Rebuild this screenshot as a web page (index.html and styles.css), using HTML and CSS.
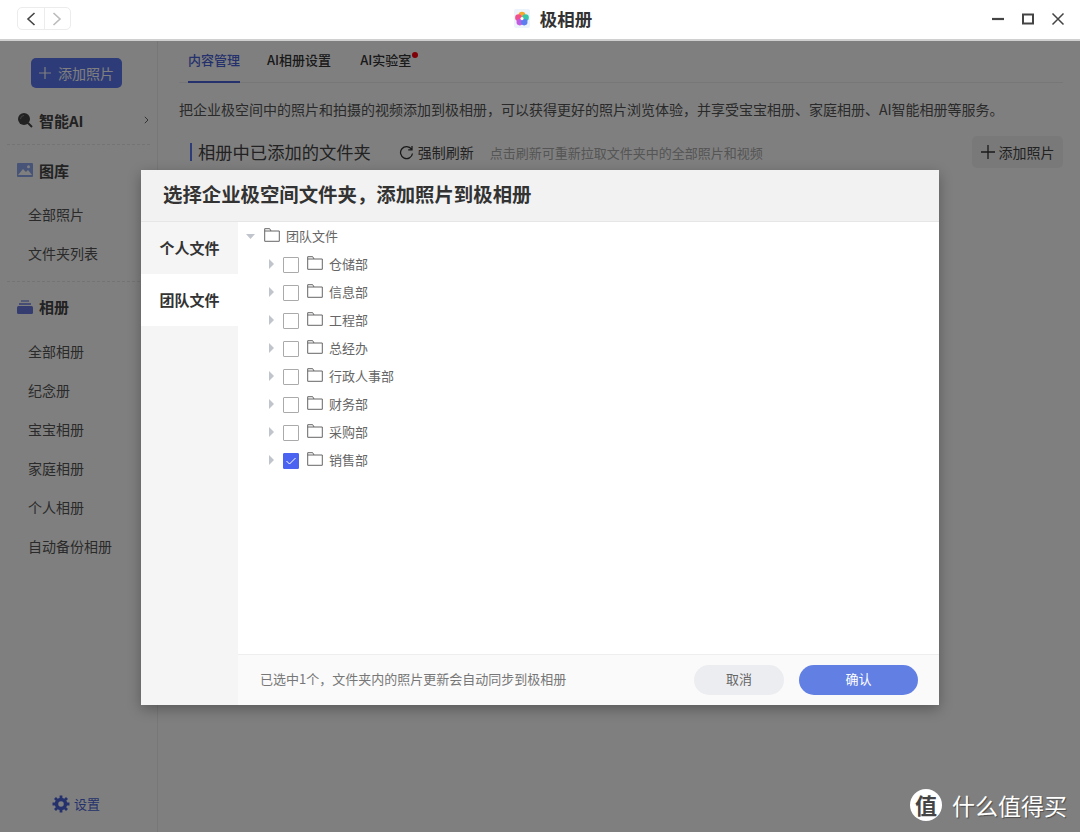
FILE: index.html
```html
<!DOCTYPE html>
<html lang="zh">
<head>
<meta charset="utf-8">
<title>极相册</title>
<link rel="stylesheet" href="styles.css">
</head>
<body>
<div class="app">
  <header class="titlebar">
    <div class="navgroup">
      <button class="navbtn"><svg width="12" height="16" viewBox="0 0 12 16"><path d="M9.5 2 3 8l6.5 6" fill="none" stroke="#444" stroke-width="1.6"/></svg></button>
      <button class="navbtn"><svg width="12" height="16" viewBox="0 0 12 16"><path d="M2.5 2 9 8l-6.500 6" fill="none" stroke="#bbb" stroke-width="1.600"/></svg></button>
    </div>
    <div class="apptitle">
      <span class="applogo"><svg width="14" height="16" viewBox="0 0 16 18"><circle cx="8" cy="4.500" r="3.800" fill="#f7a72b"/><circle cx="4" cy="7.500" r="3.800" fill="#f0508c"/><circle cx="12" cy="7.500" r="3.800" fill="#38c6a8"/><circle cx="5.500" cy="12.500" r="3.800" fill="#c35be0"/><circle cx="10.500" cy="12.500" r="3.800" fill="#5d7cf0"/><circle cx="8" cy="8.500" r="1.800" fill="#fff"/></svg></span>
      <span>极相册</span>
    </div>
    <div class="winctl">
      <svg width="14" height="14" viewBox="0 0 14 14"><path d="M1 7h12" stroke="#444" stroke-width="2.200"/></svg>
      <svg width="14" height="14" viewBox="0 0 14 14"><rect x="2" y="2.500" width="10" height="9" fill="none" stroke="#444" stroke-width="2"/></svg>
      <svg width="14" height="14" viewBox="0 0 14 14"><path d="m1.500 1.500 11 11M12.500 1.500l-11 11" stroke="#444" stroke-width="1.500"/></svg>
    </div>
  </header>

  <div class="content">
    <aside class="sidebar">
      <button class="addmain"><svg width="14" height="14" viewBox="0 0 14 14"><path d="M7 1v12M1 7h12" stroke="#fff" stroke-width="1.200"/></svg>添加照片</button>
      <div class="section section-first">
        <div class="sechead">
          <svg class="secicon" width="16" height="16" viewBox="0 0 16 16"><circle cx="7" cy="7" r="6" fill="#444"/><path d="m11 11 4 4" stroke="#444" stroke-width="2"/><path d="M3.500 7A3.500 3.500 0 0 1 7 3.500" stroke="#888" fill="none"/></svg>
          <span class="secname">智能AI</span>
          <svg class="chev" width="5" height="8" viewBox="0 0 5 8"><path d="m.8.8 3.200 3.200L.8 7.200" fill="none" stroke="#666" stroke-width="1"/></svg>
        </div>
      </div>
      <div class="section">
        <div class="sechead">
          <svg class="secicon" width="16" height="16" viewBox="0 0 16 16"><rect y="1" width="16" height="14" rx="1" fill="#8fa8ee"/><path d="M1 13 6 7l3 3 2-2 4 5Z" fill="#fff"/><circle cx="11.500" cy="4.800" r="1.500" fill="#fff"/></svg>
          <span class="secname">图库</span>
        </div>
        <a class="navitem">全部照片</a>
        <a class="navitem">文件夹列表</a>
      </div>
      <div class="section section-albums">
        <div class="sechead">
          <svg class="secicon" width="16" height="16" viewBox="0 0 16 16"><rect x="4" y="1" width="8" height="2" fill="#a9b6ee"/><rect x="2" y="4" width="12" height="2" fill="#8c9cea"/><rect y="7" width="16" height="8" rx="1.500" fill="#6a78e0"/></svg>
          <span class="secname">相册</span>
        </div>
        <a class="navitem">全部相册</a>
        <a class="navitem">纪念册</a>
        <a class="navitem">宝宝相册</a>
        <a class="navitem">家庭相册</a>
        <a class="navitem">个人相册</a>
        <a class="navitem">自动备份相册</a>
      </div>
      <div class="settings">
        <svg width="18" height="18" viewBox="0 0 18 18"><circle cx="9" cy="9" r="4.500" fill="none" stroke="#4a63d8" stroke-width="3.500"/><path d="M9 .5v3M9 14.500v3M.5 9h3M14.500 9h3M3 3l2 2M13 13l2 2M15 3l-2 2M5 13l-2 2" stroke="#4a63d8" stroke-width="2.800"/></svg>
        <span>设置</span>
      </div>
    </aside>

    <main class="main">
      <nav class="tabs">
        <a class="tab tab-active">内容管理</a>
        <a class="tab">AI相册设置</a>
        <a class="tab tab-dot">AI实验室</a>
      </nav>
      <p class="intro">把企业极空间中的照片和拍摄的视频添加到极相册，可以获得更好的照片浏览体验，并享受宝宝相册、家庭相册、AI智能相册等服务。</p>
      <div class="folderbar">
        <h2 class="foldertitle">相册中已添加的文件夹</h2>
        <span class="refresh"><svg width="15" height="15" viewBox="0 0 15 15"><path d="M12.500 4.200A6 6 0 1 0 13.500 8.500M13 1v3.800H9.200" fill="none" stroke="#333" stroke-width="1.300"/></svg>强制刷新</span>
        <span class="hint">点击刷新可重新拉取文件夹中的全部照片和视频</span>
        <button class="addsmall"><svg width="14" height="14" viewBox="0 0 14 14"><path d="M7 0v14M0 7h14" stroke="#333" stroke-width="1.300"/></svg>添加照片</button>
      </div>
    </main>
  </div>

  <div class="backdrop"></div>

  <section class="modal">
    <h1 class="modalhead">选择企业极空间文件夹，添加照片到极相册</h1>
    <div class="modalbody">
      <div class="modaltabs">
        <div class="mtab">个人文件</div>
        <div class="mtab mtab-active">团队文件</div>
      </div>
      <div class="treepane">
        <div class="tree">
          <div class="row row-root">
            <svg class="arrow" width="9" height="9" viewBox="0 0 9 9"><path d="M0 2h9L4.500 7Z" fill="#c0c4cc"/></svg>
            <svg class="folder" width="16" height="14" viewBox="0 0 16 14"><path d="M.7.7h5l1.300 2.300h8.300v10.300H.7ZM.7 3h6.300" fill="none" stroke="#666" stroke-width="1"/></svg>
            <span>团队文件</span>
          </div>
          <div class="row"><svg class="arrow" width="7" height="10" viewBox="0 0 7 10"><path d="M2 0v10l5-5Z" fill="#c0c4cc"/></svg><i class="check"></i><svg class="folder" width="16" height="14" viewBox="0 0 16 14"><path d="M.7.7h5l1.300 2.300h8.300v10.300H.7ZM.7 3h6.300" fill="none" stroke="#666" stroke-width="1"/></svg><span>仓储部</span></div>
          <div class="row"><svg class="arrow" width="7" height="10" viewBox="0 0 7 10"><path d="M2 0v10l5-5Z" fill="#c0c4cc"/></svg><i class="check"></i><svg class="folder" width="16" height="14" viewBox="0 0 16 14"><path d="M.7.7h5l1.300 2.300h8.300v10.300H.7ZM.7 3h6.300" fill="none" stroke="#666" stroke-width="1"/></svg><span>信息部</span></div>
          <div class="row"><svg class="arrow" width="7" height="10" viewBox="0 0 7 10"><path d="M2 0v10l5-5Z" fill="#c0c4cc"/></svg><i class="check"></i><svg class="folder" width="16" height="14" viewBox="0 0 16 14"><path d="M.7.7h5l1.300 2.300h8.300v10.300H.7ZM.7 3h6.300" fill="none" stroke="#666" stroke-width="1"/></svg><span>工程部</span></div>
          <div class="row"><svg class="arrow" width="7" height="10" viewBox="0 0 7 10"><path d="M2 0v10l5-5Z" fill="#c0c4cc"/></svg><i class="check"></i><svg class="folder" width="16" height="14" viewBox="0 0 16 14"><path d="M.7.7h5l1.300 2.300h8.300v10.300H.7ZM.7 3h6.300" fill="none" stroke="#666" stroke-width="1"/></svg><span>总经办</span></div>
          <div class="row"><svg class="arrow" width="7" height="10" viewBox="0 0 7 10"><path d="M2 0v10l5-5Z" fill="#c0c4cc"/></svg><i class="check"></i><svg class="folder" width="16" height="14" viewBox="0 0 16 14"><path d="M.7.7h5l1.300 2.300h8.300v10.300H.7ZM.7 3h6.300" fill="none" stroke="#666" stroke-width="1"/></svg><span>行政人事部</span></div>
          <div class="row"><svg class="arrow" width="7" height="10" viewBox="0 0 7 10"><path d="M2 0v10l5-5Z" fill="#c0c4cc"/></svg><i class="check"></i><svg class="folder" width="16" height="14" viewBox="0 0 16 14"><path d="M.7.7h5l1.300 2.300h8.300v10.300H.7ZM.7 3h6.300" fill="none" stroke="#666" stroke-width="1"/></svg><span>财务部</span></div>
          <div class="row"><svg class="arrow" width="7" height="10" viewBox="0 0 7 10"><path d="M2 0v10l5-5Z" fill="#c0c4cc"/></svg><i class="check"></i><svg class="folder" width="16" height="14" viewBox="0 0 16 14"><path d="M.7.7h5l1.300 2.300h8.300v10.300H.7ZM.7 3h6.300" fill="none" stroke="#666" stroke-width="1"/></svg><span>采购部</span></div>
          <div class="row"><svg class="arrow" width="7" height="10" viewBox="0 0 7 10"><path d="M2 0v10l5-5Z" fill="#c0c4cc"/></svg><i class="check check-on"><svg width="16" height="16" viewBox="0 0 16 16"><path d="m3.500 8 3 3 6-6" fill="none" stroke="#fff" stroke-width="1"/></svg></i><svg class="folder" width="16" height="14" viewBox="0 0 16 14"><path d="M.7.7h5l1.300 2.300h8.300v10.300H.7ZM.7 3h6.300" fill="none" stroke="#666" stroke-width="1"/></svg><span>销售部</span></div>
        </div>
        <footer class="modalfoot">
          <span class="footnote">已选中1个，文件夹内的照片更新会自动同步到极相册</span>
          <button class="btn btn-cancel">取消</button>
          <button class="btn btn-ok">确认</button>
        </footer>
      </div>
    </div>
  </section>

  <div class="watermark">
    <span class="wmlogo">值</span>
    <span>什么值得买</span>
  </div>
</div>
</body>
</html>
```
FILE: styles.css
```css
* { box-sizing: border-box; }
html, body { margin: 0; height: 100%; }
body {
  font-family: "Noto Sans CJK SC", "Noto Sans", sans-serif;
  color: #333;
  background: #fff;
  overflow: hidden;
}
button { font-family: inherit; }
.app { position: relative; width: 1080px; height: 832px; display: flex; flex-direction: column; overflow: hidden; }

.titlebar {
  height: 41px; flex: none; display: flex; align-items: center; justify-content: space-between;
  padding: 0 15px 2px 17px; background: #fff; border-bottom: 2px solid #d0d0d0; position: relative; z-index: 3;
}
.navgroup { display: flex; width: 54px; height: 23px; border: 1px solid #ececec; border-radius: 5px; }
.navbtn { flex: 1; padding: 0; border: 0; background: none; display: flex; align-items: center; justify-content: center; }
.navbtn + .navbtn { border-left: 1px solid #ececec; }
.apptitle { display: flex; align-items: center; gap: 10px; font-size: 17.5px; font-weight: 700; color: #333; line-height: 24px; margin-left: 44px; }
.applogo { width: 16px; height: 19px; background: #edf3fb; display: flex; align-items: center; justify-content: center; border-radius: 2px; }
.winctl { display: flex; gap: 16px; align-items: center; }

.content { flex: 1; display: flex; min-height: 0; }
.sidebar { width: 158px; flex: none; border-right: 1px solid #eee; display: flex; flex-direction: column; padding: 17px 7px 0; position: relative; }
.addmain {
  align-self: center; width: 91px; height: 30px; margin-right: 5px; border: 0; border-radius: 5px; background: #5b77f0; color: #fff;
  display: flex; align-items: center; justify-content: center; gap: 6px; font-size: 14px; padding: 0;
}
.section { border-top: 1px dashed #e8e8e8; padding-bottom: 8px; }
.section-first { border-top: 0; margin-top: 18px; padding-bottom: 10px; }
.sechead { height: 50px; display: flex; align-items: center; padding: 0 0 0 10px; gap: 6px; position: relative; }
.section-first .sechead { height: 28px; }
.section-albums .sechead { height: 49.5px; }
.secname { font-size: 15px; font-weight: 700; color: #444; }
.secicon { flex: none; }
.chev { margin-left: auto; margin-right: 1px; }
.navitem { display: block; height: 39px; line-height: 39px; font-size: 14px; color: #555; padding-left: 21px; }
.settings { margin-top: auto; margin-bottom: 19px; display: flex; align-items: center; justify-content: center; gap: 4px; font-size: 13px; color: #4a63d8; padding-right: 5px; }

.main { flex: 1; min-width: 0; padding: 0 17px 0 21px; }
.tabs { height: 42px; display: flex; gap: 27px; border-bottom: 1px solid #eee; padding-left: 9px; }
.tab { height: 42px; line-height: 37px; font-size: 13px; font-weight: 500; color: #333; position: relative; }
.tab-active { color: #4a63d8; border-bottom: 2px solid #4a63d8; }
.tab-dot { margin-left: 2px; }
.tab-dot::after { content: ""; position: absolute; right: -7px; top: 11px; width: 6px; height: 6px; border-radius: 50%; background: #ff0010; }
.intro { margin: 14px 0 0; font-size: 14px; line-height: 24px; color: #555; white-space: nowrap; }
.folderbar { display: flex; align-items: center; margin-top: 15px; height: 32px; padding-left: 11px; border-bottom: 0; }
.foldertitle { margin: 0 28px 0 0; font-size: 17.3px; font-weight: 400; color: #444; border-left: 2px solid #5b77f0; padding-left: 6px; line-height: 18px; }
.refresh { display: flex; align-items: center; gap: 4px; font-size: 14px; color: #444; }
.hint { margin-left: 16px; font-size: 13px; color: #aaa; }
.addsmall { margin-left: auto; width: 91px; height: 32px; border: 0; border-radius: 5px; background: #f2f2f2; color: #444; font-size: 14px; display: flex; align-items: center; justify-content: center; gap: 4px; padding: 0; }

.backdrop { position: absolute; left: 0; right: 0; top: 41px; bottom: 0; background: rgba(0,0,0,.5); z-index: 1; }

.modal {
  position: absolute; left: 141px; top: 170px; width: 798px; height: 535px; background: #fff; z-index: 2;
  display: flex; flex-direction: column; box-shadow: 0 4px 14px rgba(0,0,0,.3); border-radius: 3px 3px 0 0;
}
.modalhead { margin: 0; height: 52px; flex: none; background: #f2f2f2; border-bottom: 1px solid #e6e6e6; font-size: 19.4px; font-weight: 700; color: #333; line-height: 48px; padding-left: 22px; }
.modalbody { flex: 1; display: flex; min-height: 0; }
.modaltabs { width: 97px; flex: none; background: #f5f5f5; }
.mtab { height: 52px; line-height: 52px; font-size: 15px; font-weight: 700; color: #333; padding-left: 18.5px; }
.mtab-active { background: #fff; }
.treepane { flex: 1; display: flex; flex-direction: column; min-width: 0; }
.tree { flex: 1; }
.row { height: 28px; display: flex; align-items: center; padding-left: 29px; font-size: 13px; color: #666; }
.row span { margin-top: -2px; }
.row .arrow { flex: none; margin-right: 9px; }
.row .folder { flex: none; margin: -3px 6px 0 0; }
.row-root { padding-left: 8px; }
.row-root .arrow { margin-right: 9px; }
.check { width: 16px; height: 16px; flex: none; border: 1px solid #aaa; border-radius: 1px; margin: 1px 8px 0 0; display: block; }
.check svg { display: block; margin: -1px; }
.check-on { background: #4a63f0; border-color: #4a63f0; }
.modalfoot { height: 51px; flex: none; display: flex; align-items: center; background: #fafafa; border-top: 1px solid #eee; padding: 0 21px 1px 22px; }
.footnote { font-size: 13px; color: #777; margin-right: auto; margin-top: -2px; }
.btn { height: 30px; border: 0; border-radius: 15px; font-size: 13px; padding: 0 0 2px; }
.btn-cancel { width: 90px; background: #ecedf1; color: #666; margin-right: 15px; }
.btn-ok { width: 119px; background: #627fe3; color: #fff; }

.watermark { position: absolute; left: 910px; top: 789px; z-index: 4; display: flex; align-items: center; gap: 10px; font-size: 23px; color: #fff; line-height: 32px; text-shadow: 1px 1px 1px rgba(0,0,0,.4); }
.wmlogo { width: 32px; height: 32px; border-radius: 50%; background: #fff; color: #444; font-size: 22px; font-weight: 700; text-align: center; line-height: 31px; text-shadow: none; }
```
